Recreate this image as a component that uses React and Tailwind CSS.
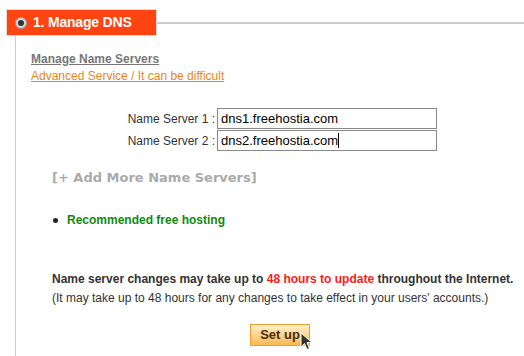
import React from 'react';

const App = () => {
  const font = { fontFamily: '"Liberation Sans", Arial, sans-serif' };

  return (
    <div className="w-[524px] h-[356px] bg-white overflow-hidden relative" style={font}>
      {/* section header */}
      <div className="flex items-center pt-[9px]">
        <div className="ml-[6px] w-[151px] h-[27px] bg-[#ff4411] border border-[#e8d8d0] flex items-center">
          <span className="ml-[8px] w-[12px] h-[12px] rounded-full bg-[#d8d8d8] border border-[#999] flex items-center justify-center">
            <span className="w-[6px] h-[6px] rounded-full bg-[#333]" />
          </span>
          <span className="ml-[6px] text-white font-bold text-[14px] tracking-[-0.2px]">1. Manage DNS</span>
        </div>
        <div className="flex-1 h-[2px] bg-[#cccccc]" />
      </div>

      {/* body with left rule */}
      <div className="ml-[15px] border-l border-[#cccccc] h-[320px] pl-[15px] pt-[15px]">
        <div className="text-[12px] leading-[17px]">
          <a className="font-bold text-[#777] underline">Manage Name Servers</a>
        </div>
        <div className="text-[12px] leading-[17px]">
          <a className="text-[#e8861c] underline">Advanced Service / It can be difficult</a>
        </div>

        <div className="mt-[23px] flex flex-col gap-[1px]">
          {[['Name Server 1 :', 'dns1.freehostia.com'], ['Name Server 2 :', 'dns2.freehostia.com']].map(([label, val], i) => (
            <div key={i} className="flex items-center">
              <span className="w-[186px] text-right pr-[2px] text-[12px] text-[#333]">{label}</span>
              <div className="w-[220px] h-[21px] border border-[#888] flex items-center px-[3px] text-[13px] text-black">
                {val}
                {i === 1 && <span className="w-[1px] h-[15px] bg-black" />}
              </div>
            </div>
          ))}
        </div>

        <div
          className="mt-[18px] ml-[21px] text-[13px] leading-[18px] font-bold text-[#aaaaaa]"
          style={{ fontFamily: '"DejaVu Sans", Verdana, sans-serif' }}
        >
          [+ Add More Name Servers]
        </div>

        <div className="mt-[24px] ml-[21px] flex items-center text-[12px]">
          <span className="w-[5px] h-[5px] rounded-full bg-[#222] ml-[1px]" />
          <span className="ml-[9px] font-bold text-[#118811]">Recommended free hosting</span>
        </div>

        <div className="mt-[41px] ml-[21px] text-[12px] leading-[19px] text-[#333]">
          <div className="font-bold">
            Name server changes may take up to <span className="text-[#ff1a1a]">48 hours to update</span> throughout the Internet.
          </div>
          <div>(It may take up to 48 hours for any changes to take effect in your users' accounts.)</div>
        </div>

        <div className="mt-[14px] flex pl-[219px]">
          <div className="relative">
            <button className="w-[60px] h-[22px] border border-[#f0a030] bg-gradient-to-b from-[#fff0c8] to-[#f8b850] text-[13px] font-bold text-[#4a2a08]">
              Set up
            </button>
            <svg className="absolute left-[50px] top-[10px]" width="14" height="20" viewBox="0 0 14 20">
              <path d="M1 1 L1 15 L4.5 11.5 L7 17.5 L9.5 16.5 L7 10.5 L12 10.5 Z" fill="#333" stroke="#fff" strokeWidth="1" />
            </svg>
          </div>
        </div>
      </div>
    </div>
  );
};

export default App;
